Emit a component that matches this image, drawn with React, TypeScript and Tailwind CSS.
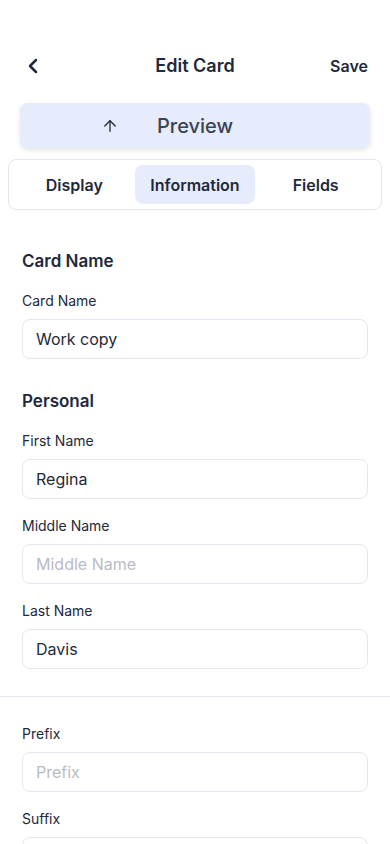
import React from 'react'
import { ChevronLeft, ArrowUp } from 'lucide-react'

type FieldProps = {
    label: string;
    value?: string;
    placeholder: string;
    className?: string;
}

function Field({ label, value, placeholder, className = '' }: FieldProps) {
    return (
        <div className={className}>
            <label className="block text-sm leading-5 text-[#1e293b]">{label}</label>
            <input
                className="mt-2 w-full h-10 rounded-lg border border-[#e2e8f0] bg-white px-[13px] text-base text-[#1e293b] placeholder:text-[#b8bcc4] outline-none"
                defaultValue={value}
                placeholder={placeholder}
            />
        </div>
    );
}

export default function App() {
    const tabs = ['Display', 'Information', 'Fields'];

    return (
        <div className="min-h-[844px] bg-white text-[#1e293b]" style={{ fontFamily: 'Inter, "Noto Sans", sans-serif' }}>
            {/* header */}
            <div className="pt-[44px] h-[88px] px-[22px] flex items-center justify-between">
                <button className="w-10 flex items-center">
                    <ChevronLeft size={24} strokeWidth={2.5} className="text-[#1e293b] -ml-[1px]" />
                </button>
                <h1 className="text-lg font-semibold">Edit Card</h1>
                <button className="w-10 flex justify-end text-base font-semibold">Save</button>
            </div>

            {/* preview */}
            <div className="mx-5 mt-[15px] h-[45px] rounded-lg bg-[#e6ecfb] shadow-[0_2px_5px_rgba(15,23,42,0.12)] grid grid-cols-[1fr_auto_1fr] items-center">
                <ArrowUp size={18} strokeWidth={1.75} className="justify-self-end mr-[38px] text-[#1e293b]" />
                <span className="text-xl font-medium text-[#3b4352]">Preview</span>
                <span />
            </div>

            {/* tabs */}
            <div className="mx-2 mt-[11px] p-[5px] rounded-lg border border-[#e2e8f0] grid grid-cols-3">
                {tabs.map((t) => (
                    <div
                        key={t}
                        className={`${t == 'Information' ? 'bg-[#e6ecfb]' : ''} h-[39px] rounded-lg flex items-center justify-center text-base font-semibold`}
                    >
                        {t}
                    </div>
                ))}
            </div>

            {/* form */}
            <div className="px-[22px]">
                <h2 className="mt-[39px] text-[17px] leading-6 font-semibold">Card Name</h2>
                <Field className="mt-[18px]" label="Card Name" value="Work copy" placeholder="Card Name" />

                <h2 className="mt-[30px] text-[17px] leading-6 font-semibold">Personal</h2>
                <Field className="mt-[18px]" label="First Name" value="Regina" placeholder="First Name" />
                <Field className="mt-[17px]" label="Middle Name" placeholder="Middle Name" />
                <Field className="mt-[17px]" label="Last Name" value="Davis" placeholder="Last Name" />
            </div>

            <div className="mt-[27px] h-px bg-[#e2e8f0]" />

            <div className="px-[22px]">
                <Field className="mt-[27px]" label="Prefix" placeholder="Prefix" />
                <Field className="mt-[17px]" label="Suffix" placeholder="Suffix" />
            </div>
        </div>
    );
}
